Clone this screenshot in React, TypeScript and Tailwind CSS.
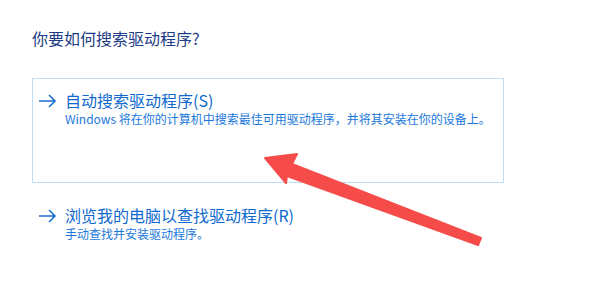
import React from "react";

function ArrowIcon() {
  return (
    <svg width="19" height="14" viewBox="0 0 19 14" className="shrink-0 mt-[5px]" fill="none">
      <path d="M1 7h16M11 1l6 6-6 6" stroke="#1a6fd0" strokeWidth="1.6" />
    </svg>
  );
}

function Option({
  title,
  desc,
  boxed,
}: {
  title: string;
  desc: string;
  boxed?: boolean;
}) {
  return (
    <div
      className={`w-[472px] border pl-[5px] pt-[10px] ${
        boxed ? "h-[105px] border-[#bcdcf5]" : "border-transparent"
      }`}
    >
      <div className="flex items-start gap-[8px]">
        <ArrowIcon />
        <div>
          <div className="text-[16px] leading-[22px] text-[#0f6ad0]">{title}</div>
          <div className="text-[12px] leading-[16px] text-[#1a78dc]">{desc}</div>
        </div>
      </div>
    </div>
  );
}

export default function App() {
  return (
    <div
      className="relative w-[600px] h-[298px] bg-white overflow-hidden pl-[32px] pt-[26px]"
      style={{ fontFamily: '"Noto Sans CJK SC", "Noto Sans", sans-serif' }}
    >
      <div className="text-[16px] leading-[24px] text-[#1d3b86]">你要如何搜索驱动程序?</div>

      <div className="mt-[28px]">
        <Option
          boxed
          title="自动搜索驱动程序(S)"
          desc="Windows 将在你的计算机中搜索最佳可用驱动程序，并将其安装在你的设备上。"
        />
      </div>
      <div className="mt-[10px]">
        <Option title="浏览我的电脑以查找驱动程序(R)" desc="手动查找并安装驱动程序。" />
      </div>

      {/* red annotation arrow */}
      <svg
        className="absolute left-0 top-0 pointer-events-none"
        width="600"
        height="298"
        viewBox="0 0 600 298"
      >
        <polygon
          points="265,158 297,154 292,164 481,238 478,245 287,176 286,183"
          fill="#f54c4a"
          stroke="#f54c4a"
          strokeWidth="2"
          strokeLinejoin="round"
        />
      </svg>
    </div>
  );
}
